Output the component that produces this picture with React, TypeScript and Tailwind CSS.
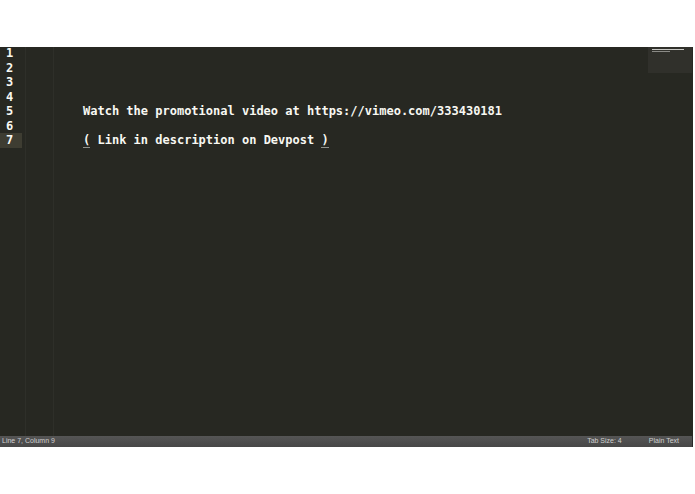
import React from "react";

const lines: string[] = [
  "",
  "",
  "",
  "",
  "Watch the promotional video at https://vimeo.com/333430181",
  "",
  "( Link in description on Devpost )",
];

export default function App() {
  return (
    <div className="w-[695px] h-[494px] bg-white flex flex-col" style={{ fontFamily: "'DejaVu Sans Mono', monospace" }}>
      <div className="h-[47px] shrink-0 bg-white" />
      <div className="relative h-[389px] w-[693px] bg-[#272822] overflow-hidden">
        <div className="absolute left-[25px] top-0 bottom-0 w-px bg-[#2e2f29]" />
        <div className="absolute left-[53px] top-0 bottom-0 w-px bg-[#2e2f29]" />
        <div className="absolute right-[1px] top-0 w-[44px] h-[26px] bg-[#30302b]">
          <div className="mt-[2px] ml-[4px] h-px w-[32px] bg-[#c8c8c4]" />
          <div className="mt-[1px] ml-[4px] h-px w-[18px] bg-[#8a8a86]" />
        </div>
        <div className="-mt-px flex flex-col">
          {lines.map((t, i) => (
            <div key={i} className="flex h-[14.5px] items-center">
              <div
                className={
                  "w-[22px] h-full pl-[6px] text-[12px] font-bold leading-[14.5px] text-[#f8f8f2] " +
                  (i === 6 ? "bg-[#3e3d32]" : "")
                }
              >
                {i + 1}
              </div>
              <div className="pl-[61px] text-[12px] font-bold leading-[14.5px] text-[#f8f8f2] whitespace-pre">
                {i === 6 ? (
                  <>
                    <span className="border-b border-[#8f908a]">(</span>
                    {" Link in description on Devpost "}
                    <span className="border-b border-[#8f908a]">)</span>
                  </>
                ) : (
                  t
                )}
              </div>
            </div>
          ))}
        </div>
      </div>
      <div
        className="h-[11px] w-[693px] bg-gradient-to-b from-[#555555] to-[#474747] flex items-center text-[7px] text-[#d0d0d0] border-r border-[#2a2a2a]"
        style={{ fontFamily: "'Liberation Sans', Arial, sans-serif" }}
      >
        <span className="pl-[2px]">Line 7, Column 9</span>
        <span className="ml-auto mr-[27px]">Tab Size: 4</span>
        <span className="mr-[13px]">Plain Text</span>
      </div>
      <div className="flex-1 bg-white" />
    </div>
  );
}
